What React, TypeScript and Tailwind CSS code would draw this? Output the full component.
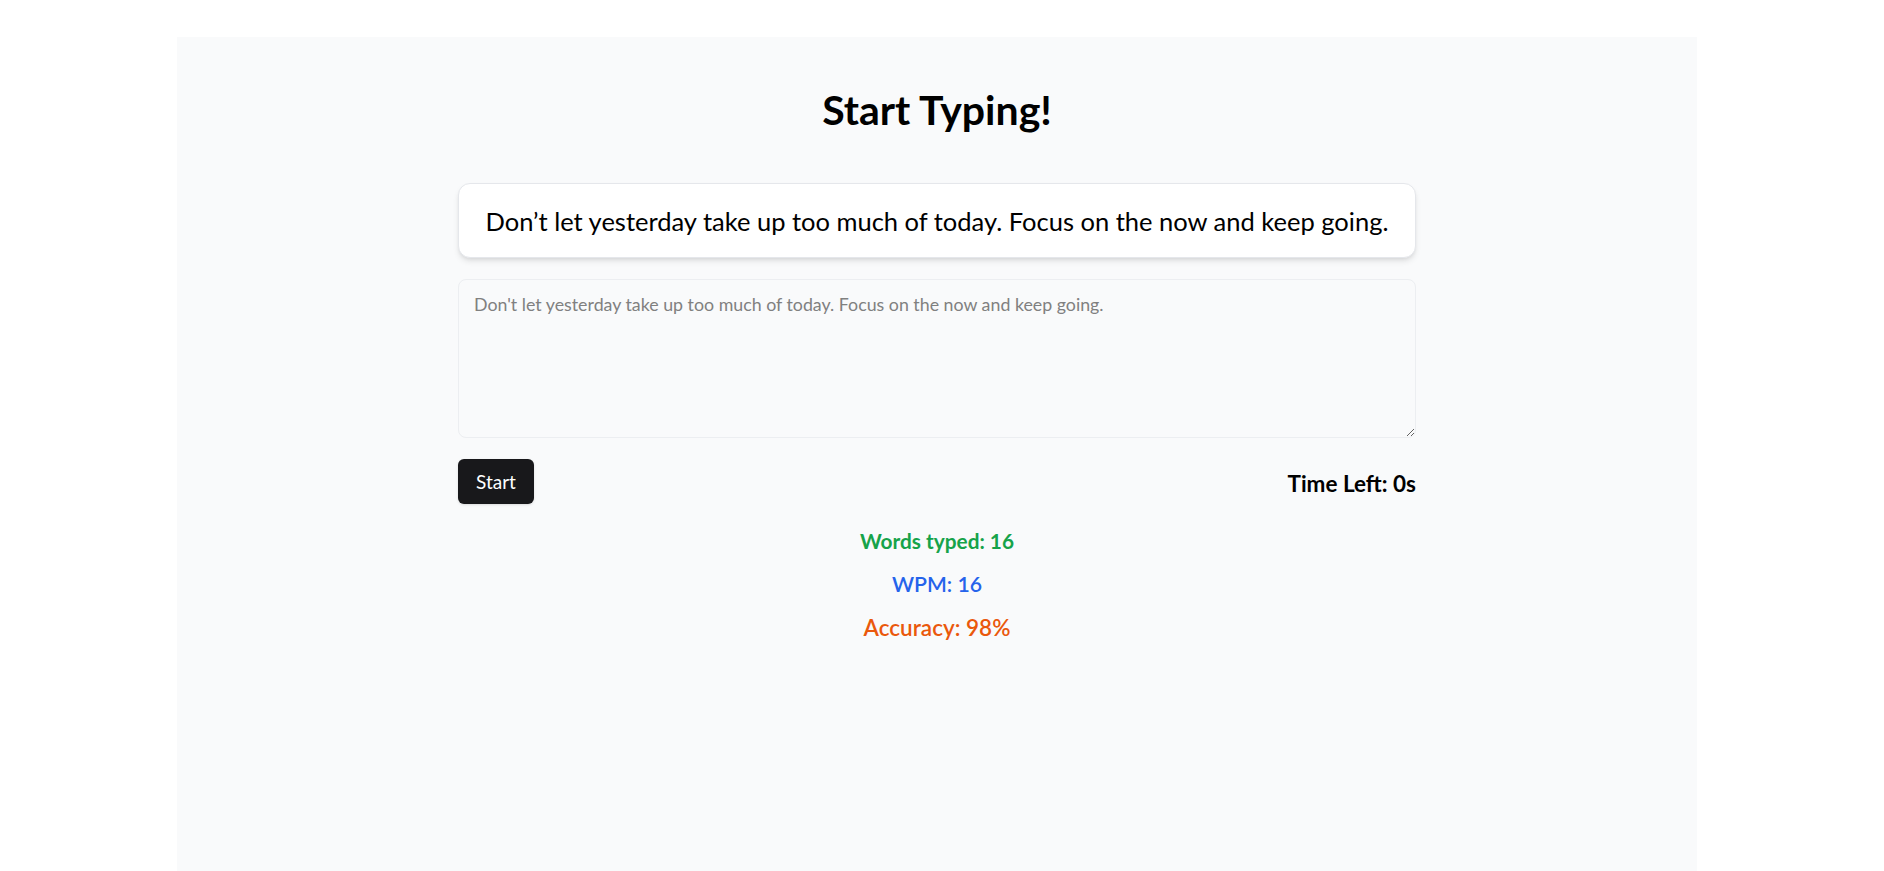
const quote = 'Don’t let yesterday take up too much of today. Focus on the now and keep going.'

export default function App() {
  return (
    <div className="min-h-screen bg-white pt-[37px] font-['Lato',sans-serif] text-black">
      <div className="ml-[177px] w-[1520px] min-h-[834px] bg-[#f9fafb] pt-[49px]">
        <div className="mx-auto flex w-[958px] flex-col">
          <h1 className="text-center text-[41px] font-bold leading-[48px]">Start Typing!</h1>

          <div className="mt-[49px] flex h-[75px] items-center justify-center rounded-xl border border-[#e5e7eb] bg-white px-6 shadow-md">
            <p className="whitespace-nowrap text-[25.5px] leading-[34px]">{quote}</p>
          </div>

          <textarea
            className="mt-[21px] h-[159px] w-full rounded-lg border border-[#eceef1] bg-[#f9fafb] px-[15px] py-[10px] text-[17.8px] leading-[28px] outline-none placeholder:text-[#808080]"
            placeholder="Don't let yesterday take up too much of today. Focus on the now and keep going."
          />

          <div className="mt-[21px] flex items-center justify-between">
            <button className="h-[45px] rounded-md bg-[#18181b] px-[18px] pt-[1px] text-[19px] text-white shadow-sm">
              Start
            </button>
            <span className="mt-[4px] text-[22.5px] font-bold">Time Left: 0s</span>
          </div>

          <div className="mt-[23px] flex flex-col items-center">
            <p className="text-[20.8px] font-bold leading-[28px] text-[#16a34a]">Words typed: 16</p>
            <p className="mt-[13px] text-[21.2px] font-semibold leading-[32px] text-[#2563eb]">WPM: 16</p>
            <p className="mt-[12px] text-[22.5px] font-semibold leading-[32px] text-[#ea580c]">Accuracy: 98%</p>
          </div>
        </div>
      </div>
    </div>
  )
}
